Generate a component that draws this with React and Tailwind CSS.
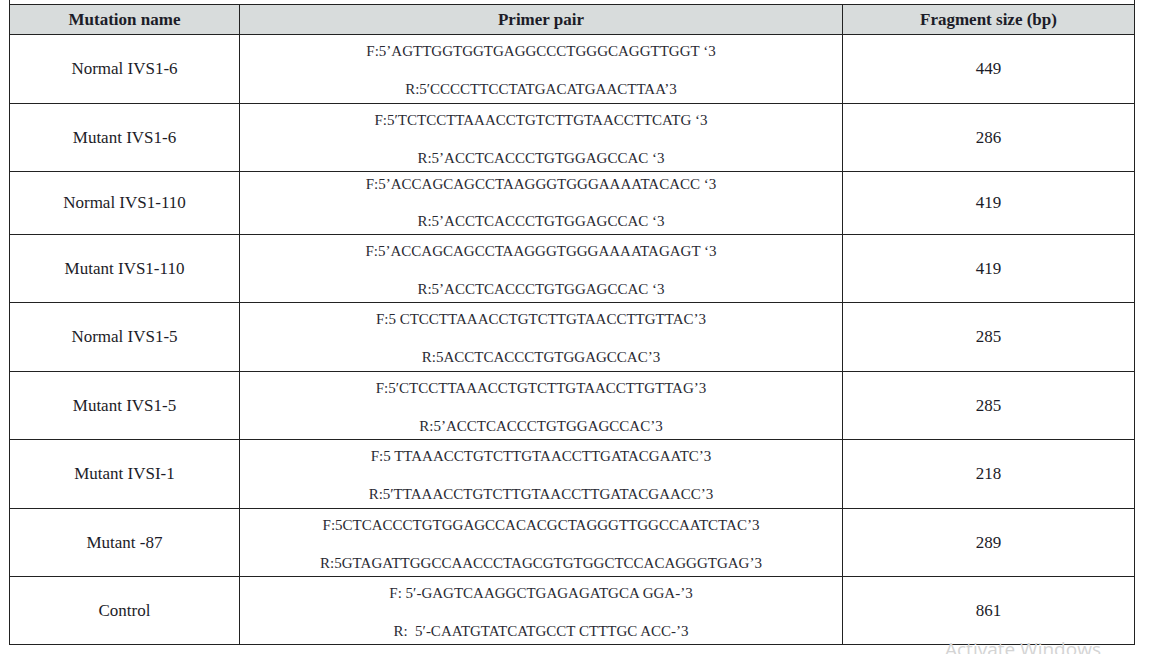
import React from "react";

const rows = [
  { name: "Normal IVS1-6", f: "F:5’AGTTGGTGGTGAGGCCCTGGGCAGGTTGGT ‘3", r: "R:5′CCCCTTCCTATGACATGAACTTAA’3", size: "449", h: "h-[69px]" },
  { name: "Mutant IVS1-6", f: "F:5′TCTCCTTAAACCTGTCTTGTAACCTTCATG ‘3", r: "R:5’ACCTCACCCTGTGGAGCCAC ‘3", size: "286", h: "h-[68px]" },
  { name: "Normal IVS1-110", f: "F:5’ACCAGCAGCCTAAGGGTGGGAAAATACACC ‘3", r: "R:5’ACCTCACCCTGTGGAGCCAC ‘3", size: "419", h: "h-[63px]", tight: true },
  { name: "Mutant IVS1-110", f: "F:5’ACCAGCAGCCTAAGGGTGGGAAAATAGAGT ‘3", r: "R:5’ACCTCACCCTGTGGAGCCAC ‘3", size: "419", h: "h-[68px]" },
  { name: "Normal IVS1-5", f: "F:5 CTCCTTAAACCTGTCTTGTAACCTTGTTAC’3", r: "R:5ACCTCACCCTGTGGAGCCAC’3", size: "285", h: "h-[69px]" },
  { name: "Mutant IVS1-5", f: "F:5′CTCCTTAAACCTGTCTTGTAACCTTGTTAG’3", r: "R:5’ACCTCACCCTGTGGAGCCAC’3", size: "285", h: "h-[68px]" },
  { name: "Mutant IVSI-1", f: "F:5 TTAAACCTGTCTTGTAACCTTGATACGAATC’3", r: "R:5′TTAAACCTGTCTTGTAACCTTGATACGAACC’3", size: "218", h: "h-[69px]" },
  { name: "Mutant -87", f: "F:5CTCACCCTGTGGAGCCACACGCTAGGGTTGGCCAATCTAC’3", r: "R:5GTAGATTGGCCAACCCTAGCGTGTGGCTCCACAGGGTGAG’3", size: "289", h: "h-[68px]" },
  { name: "Control", f: "F: 5′-GAGTCAAGGCTGAGAGATGCA GGA-’3", r: "R:  5′-CAATGTATCATGCCT CTTTGC ACC-’3", size: "861", h: "h-[68px]" },
];

const serif = "font-[Liberation_Serif,Times_New_Roman,serif]";

export default function App() {
  return (
    <div className={`relative h-[654px] w-[1151px] overflow-hidden bg-white text-[#1c1c28] ${serif}`}>
      <div className="ml-[9px] h-[4px] w-[1126px] border-x border-[#222]" />
      <table className={`ml-[9px] w-[1126px] table-fixed border-collapse ${serif}`}>
        <colgroup>
          <col className="w-[230px]" />
          <col className="w-[603px]" />
          <col />
        </colgroup>
        <thead>
          <tr className="h-[30px] bg-[#d8dcdc]">
            <th className="border border-[#222] text-[17px] font-bold leading-[20px]">Mutation name</th>
            <th className="border border-[#222] text-[17px] font-bold leading-[20px]">Primer pair</th>
            <th className="border border-[#222] text-[17px] font-bold leading-[20px]">Fragment size (bp)</th>
          </tr>
        </thead>
        <tbody>
          {rows.map((row) => (
            <tr key={row.name} className={row.h}>
              <td className="border border-[#222] text-center align-middle text-[17px]">{row.name}</td>
              <td className="border border-[#222] p-0 text-center align-top text-[15px] text-[#2a2a33]">
                <div className={row.tight ? "flex flex-col gap-[17px] pt-[2px]" : "flex flex-col gap-[18px] pt-[6px]"}>
                  <p className="whitespace-pre leading-[20px]">{row.f}</p>
                  <p className="whitespace-pre leading-[20px]">{row.r}</p>
                </div>
              </td>
              <td className="border border-[#222] text-center align-middle text-[17px]">{row.size}</td>
            </tr>
          ))}
        </tbody>
      </table>
      <div className="absolute left-[945px] top-[637px] font-['Open_Sans',sans-serif] text-[19px] leading-[24px] text-[#d4d4d4]">
        Activate Windows
      </div>
    </div>
  );
}
